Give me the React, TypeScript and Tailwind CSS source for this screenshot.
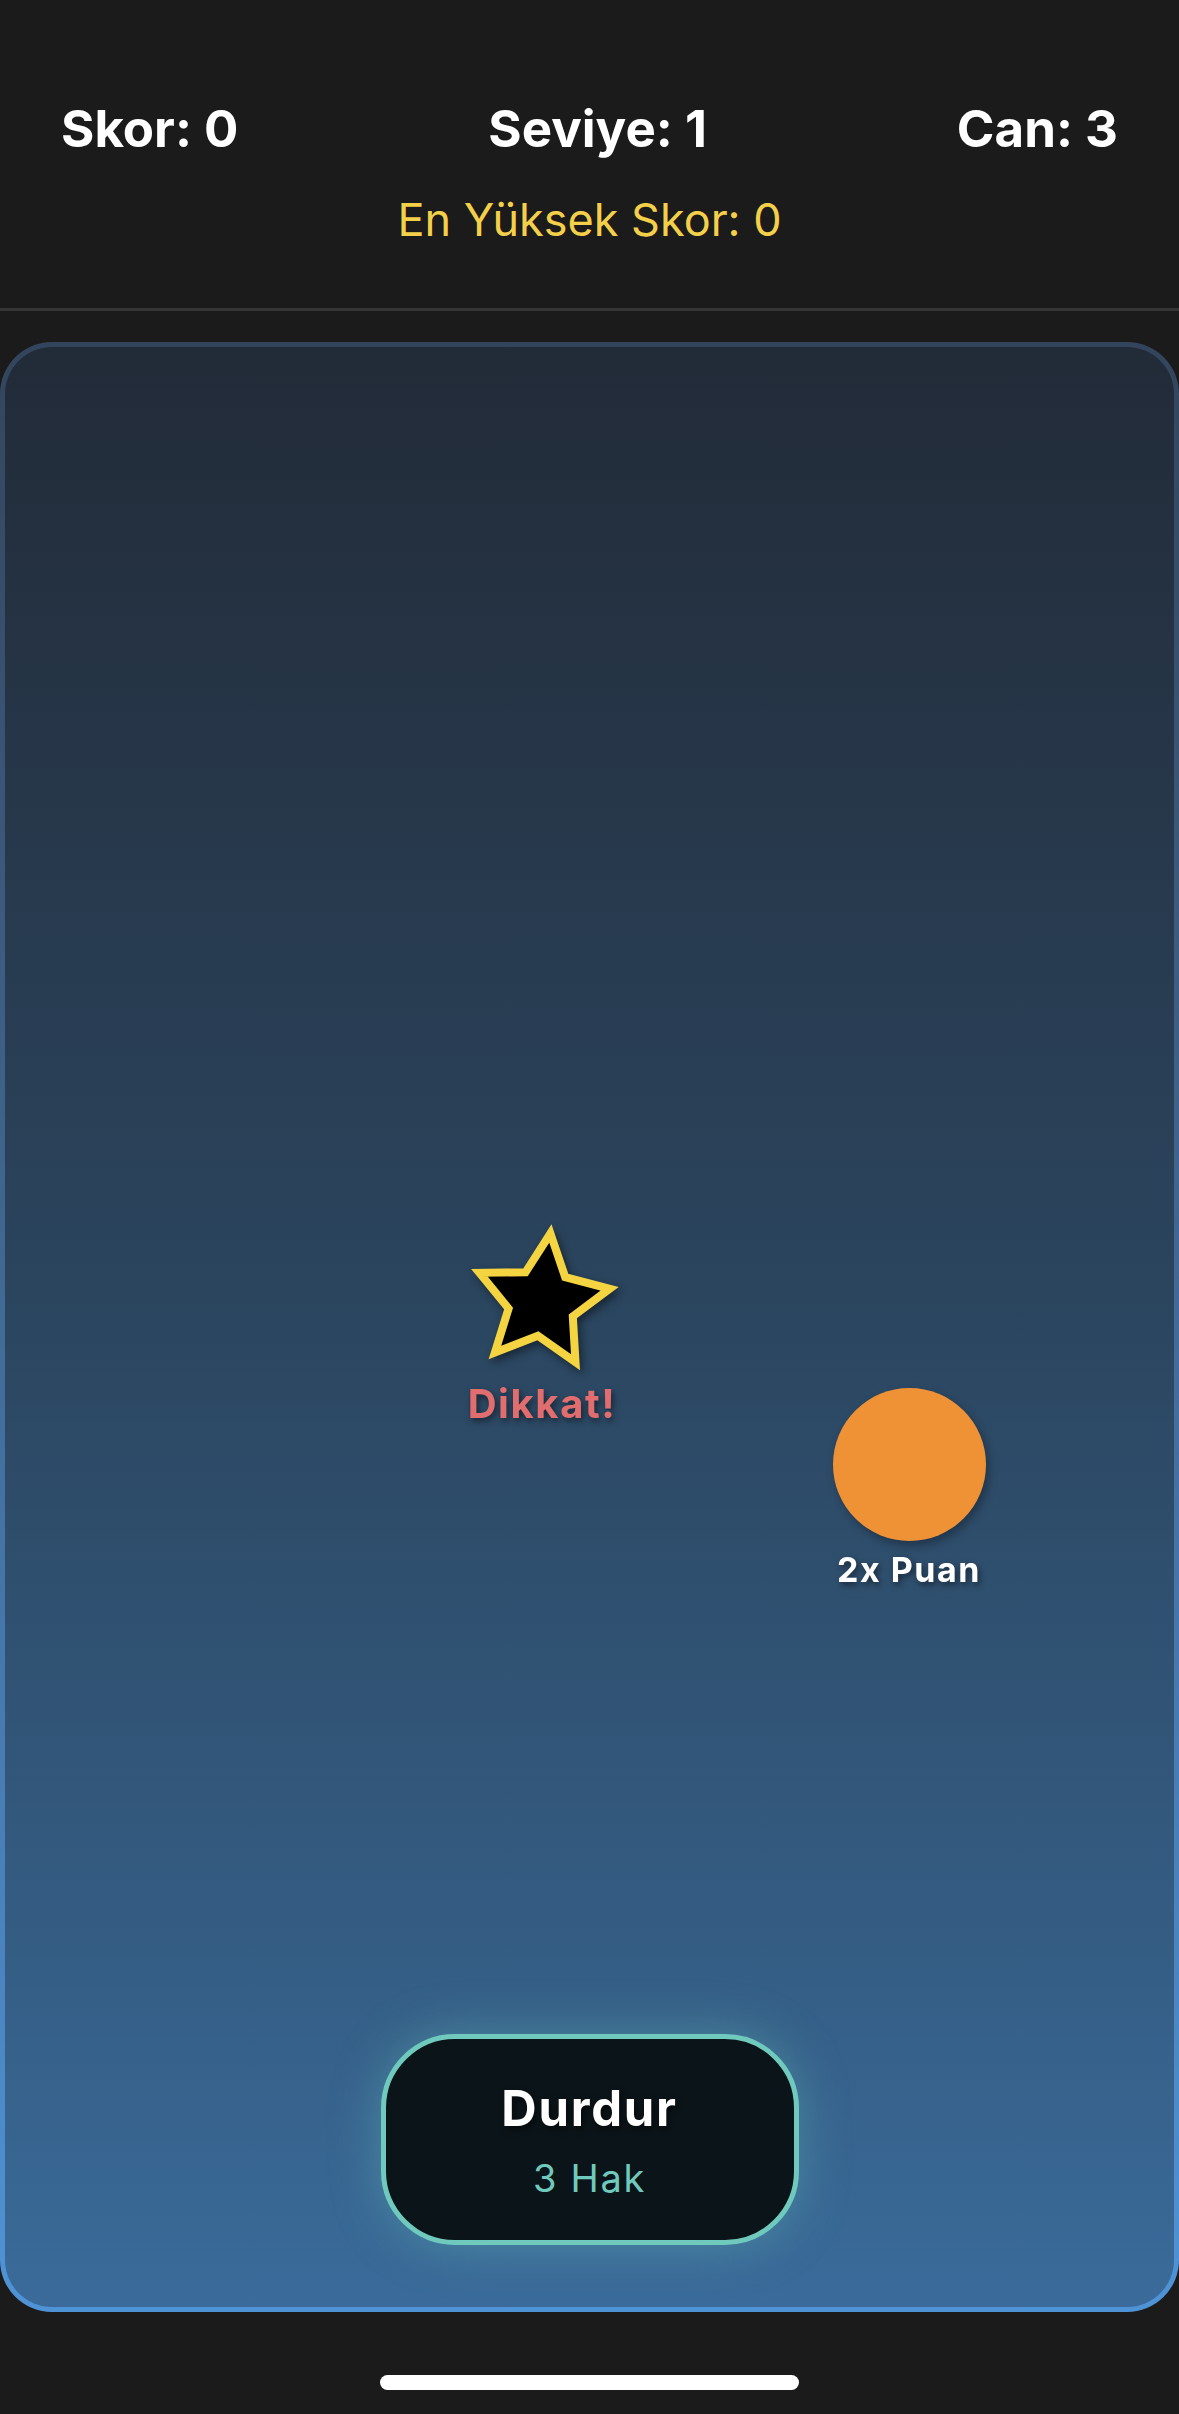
import React from 'react';

// points of a 5-pointed star, rotated a little clockwise
function starPoints(cx: number, cy: number, outer: number, inner: number, rot: number) {
  const pts: string[] = [];
  for (let i = 0; i < 10; i++) {
    const r = i % 2 === 0 ? outer : inner;
    const a = ((rot + i * 36) * Math.PI) / 180;
    pts.push(`${(cx + r * Math.sin(a)).toFixed(1)},${(cy - r * Math.cos(a)).toFixed(1)}`);
  }
  return pts.join(' ');
}

function Header() {
  return (
    <header className="bg-[#1b1b1b] border-b-[3px] border-[#353535] pt-[103px] pb-[66px]">
      <div className="flex justify-between px-[61px] text-white font-bold text-[51px] leading-none">
        <span>Skor: 0</span>
        <span>Seviye: 1</span>
        <span>Can: 3</span>
      </div>
      <p className="mt-[43px] text-center text-[45px] leading-none text-[#f4d04a]">
        En Yüksek Skor: 0
      </p>
    </header>
  );
}

function GameArea() {
  return (
    <div className="mt-[31px] h-[1970px] rounded-[52px] p-[5px] bg-linear-to-b from-[#33455c] to-[#4f93d7]">
      <div className="relative h-full rounded-[47px] bg-linear-to-b from-[#222b38] via-[#2b4660] to-[#3a6b9a] flex flex-col items-center justify-end pb-[62px]">
        {/* obstacle star */}
        <div className="absolute left-[447px] top-[873px] w-[180px] flex flex-col items-center">
          <svg width="160" height="160" viewBox="0 0 160 160" className="drop-shadow-[3px_4px_4px_rgba(0,0,0,0.45)]">
            <polygon
              points={starPoints(80, 82, 69, 34, 7)}
              fill="#000"
              stroke="#f5d442"
              strokeWidth="8"
              strokeLinejoin="miter"
            />
          </svg>
          <span className="mt-[4px] text-[40px] tracking-[0.04em] leading-none font-bold text-[#e26d6e] drop-shadow-[2px_3px_3px_rgba(0,0,0,0.5)]">
            Dikkat!
          </span>
        </div>

        {/* bonus ball */}
        <div className="absolute left-[814px] top-[1041px] w-[180px] flex flex-col items-center">
          <div className="w-[153px] h-[153px] rounded-full bg-[#ef9236] shadow-[3px_5px_10px_rgba(0,0,0,0.3)]" />
          <span className="mt-[12px] text-[34px] tracking-[0.045em] leading-none font-bold text-white drop-shadow-[2px_3px_3px_rgba(0,0,0,0.5)]">
            2x Puan
          </span>
        </div>

        <button className="w-[418px] h-[211px] rounded-[74px] border-[5px] border-[#6fcabd] bg-[#0b1418] flex flex-col items-center pt-[45px] shadow-[0_0_50px_rgba(111,202,189,0.35)]">
          <span className="text-[49px] tracking-[0.035em] leading-none font-bold text-white drop-shadow-[2px_3px_3px_rgba(0,0,0,0.5)]">
            Durdur
          </span>
          <span className="mt-[26px] text-[38px] tracking-[0.045em] leading-none text-[#6fcabd]">3 Hak</span>
        </button>
      </div>
    </div>
  );
}

export default function App() {
  return (
    <div className="w-[1179px] h-[2414px] bg-[#1b1b1b] font-['Inter',sans-serif] flex flex-col">
      <Header />
      <GameArea />
      <div className="flex justify-center mt-[63px]">
        <div className="w-[419px] h-[15px] rounded-full bg-white" />
      </div>
    </div>
  );
}
